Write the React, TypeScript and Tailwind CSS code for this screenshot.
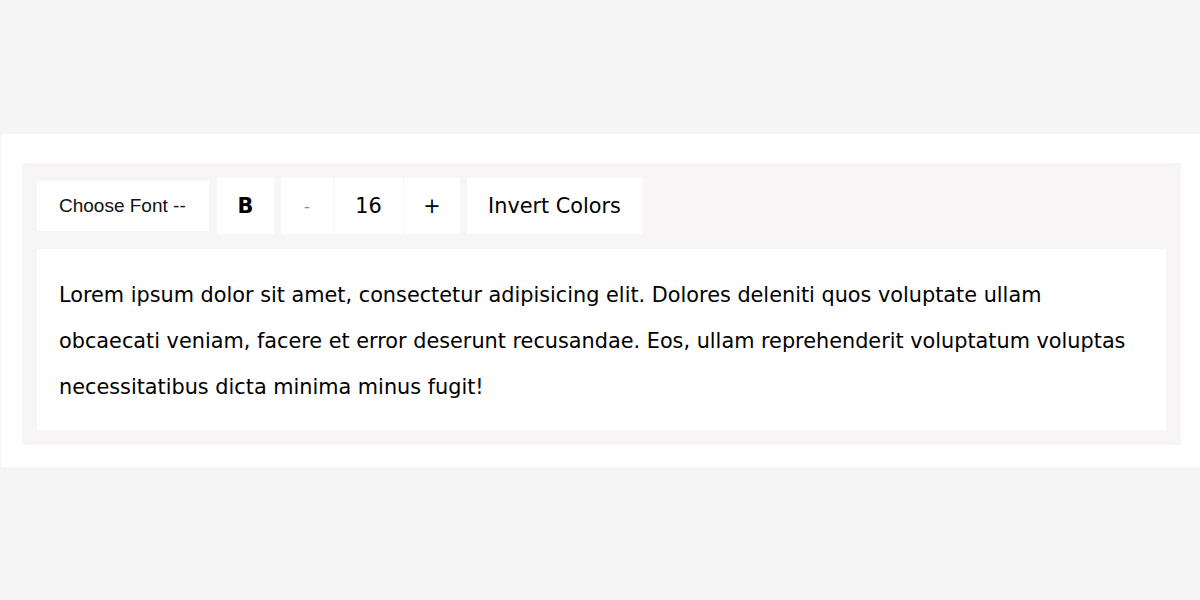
const dv = { fontFamily: "'DejaVu Sans', sans-serif" };

export default function App() {
  return (
    <div className="min-h-screen bg-[#f5f5f5] pt-[134px]">
      <section className="ml-px bg-white pl-[21px] pr-[19px] pt-[29px] pb-[22px]">
        <div className="bg-[#f7f5f5] p-[15px]">
          {/* Toolbar */}
          <div className="flex items-center gap-[7px] text-[20.8px] text-black" style={dv}>
            <div
              className="h-[50px] w-[172px] bg-white pl-[22px] flex items-center text-[19px] text-[#111]"
              style={{ fontFamily: "'Liberation Sans', Arial, sans-serif" }}
            >
              Choose Font --
            </div>
            <button className="ml-px h-[56px] w-[57px] bg-white pt-[2px] font-bold">B</button>
            <div className="flex h-[56px] gap-px">
              <button className="w-[52px] bg-white pt-[2px] text-[16px] text-[#888]">-</button>
              <div className="w-[69px] bg-white pt-[2px] flex items-center justify-center">16</div>
              <button className="w-[56px] bg-white pt-[2px]">+</button>
            </div>
            <button className="h-[56px] w-[175px] bg-white pt-[2px]">Invert Colors</button>
          </div>

          {/* Text area */}
          <div className="mt-[15px] bg-white px-[22px] pt-[23px] pb-[20px] text-[20.8px] leading-[46px] text-black" style={dv}>
            Lorem ipsum dolor sit amet, consectetur adipisicing elit. Dolores deleniti quos voluptate ullam obcaecati veniam,
            facere et error deserunt recusandae. Eos, ullam reprehenderit voluptatum voluptas necessitatibus dicta minima minus
            fugit!
          </div>
        </div>
      </section>
    </div>
  );
}
